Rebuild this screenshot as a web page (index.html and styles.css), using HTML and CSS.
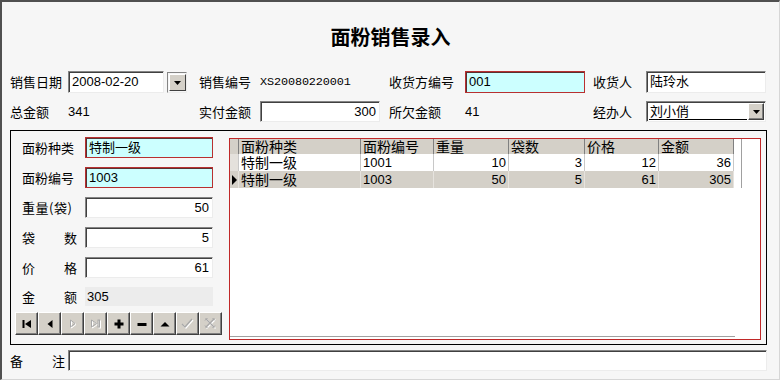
FILE: index.html
```html
<!DOCTYPE html>
<html>
<head>
<meta charset="utf-8">
<title>面粉销售录入</title>
<link rel="stylesheet" href="styles.css">
</head>
<body>
<div class="win">
  <div class="title">面粉销售录入</div>

  <div class="hdr">
    <span class="lbl">销售日期</span>
    <div class="date">
      <div class="field dfield">2008-02-20</div>
      <div class="dbtn"><div class="btn3d"><svg width="7" height="4" viewBox="0 0 7 4"><polygon points="0,0 7,0 3.5,4" fill="#000"/></svg></div></div>
    </div>
    <span class="lbl">销售编号</span>
    <span class="mono">XS20080220001</span>
    <span class="lbl">收货方编号</span>
    <div class="field req w120">001</div>
    <span class="lbl">收货人</span>
    <div class="field w120">陆玲水</div>

    <span class="lbl">总金额</span>
    <span class="val">341</span>
    <span class="lbl">实付金额</span>
    <div class="field w120 num">300</div>
    <span class="lbl">所欠金额</span>
    <span class="val">41</span>
    <span class="lbl">经办人</span>
    <div class="field combo">
      <div class="ctext">刘小俏</div>
      <div class="cbtn"><svg width="7" height="4" viewBox="0 0 7 4"><polygon points="0,0 7,0 3.5,4" fill="#000"/></svg></div>
    </div>
  </div>

  <div class="box">
    <div class="panel">
      <div class="prow"><span class="plbl">面粉种类</span><div class="field req pf">特制一级</div></div>
      <div class="prow"><span class="plbl">面粉编号</span><div class="field req pf">1003</div></div>
      <div class="prow"><span class="plbl sp1">重量(袋)</span><div class="field pf num">50</div></div>
      <div class="prow"><span class="plbl spread"><span>袋</span><span>数</span></span><div class="field pf num">5</div></div>
      <div class="prow"><span class="plbl spread"><span>价</span><span>格</span></span><div class="field pf num">61</div></div>
      <div class="prow arow"><span class="plbl spread"><span>金</span><span>额</span></span><div class="amt">305</div></div>
      <div class="nav">
        <div class="nb"><svg width="14" height="14" viewBox="0 0 14 14"><rect x="2.5" y="3" width="2" height="8" fill="#000"/><polygon points="11,3 5,7 11,11" fill="#000"/></svg></div>
        <div class="nb"><svg width="14" height="14" viewBox="0 0 14 14"><polygon points="9.5,3 4.5,7 9.5,11" fill="#000"/></svg></div>
        <div class="nb"><svg width="14" height="14" viewBox="0 0 14 14"><polygon points="5.5,4 10,7.5 5.5,11" fill="none" stroke="#fff"/><polygon points="4.5,3 9,6.5 4.5,10" fill="none" stroke="#a8a8a8"/></svg></div>
        <div class="nb"><svg width="14" height="14" viewBox="0 0 14 14"><polygon points="3.5,4 8.5,7.5 3.5,11" fill="none" stroke="#fff"/><rect x="10" y="4" width="1.5" height="7" fill="none" stroke="#fff"/><polygon points="2.5,3 7.5,6.5 2.5,10" fill="none" stroke="#a8a8a8"/><rect x="9" y="3" width="1.5" height="7" fill="none" stroke="#a8a8a8"/></svg></div>
        <div class="nb"><svg width="14" height="14" viewBox="0 0 14 14"><rect x="2.5" y="5.5" width="9" height="3" fill="#000"/><rect x="5.5" y="2.5" width="3" height="9" fill="#000"/></svg></div>
        <div class="nb"><svg width="14" height="14" viewBox="0 0 14 14"><rect x="2.5" y="6" width="9" height="3" fill="#000"/></svg></div>
        <div class="nb"><svg width="14" height="14" viewBox="0 0 14 14"><polygon points="2.5,9.5 7,5 11.5,9.5" fill="#000"/></svg></div>
        <div class="nb"><svg width="15" height="15" viewBox="0 0 15 15"><polyline points="3,9 6,12 13,4" fill="none" stroke="#fff" stroke-width="1.3"/><polyline points="2,8 5,11 12,3" fill="none" stroke="#a8a8a8" stroke-width="1.3"/></svg></div>
        <div class="nb"><svg width="15" height="15" viewBox="0 0 15 15"><path d="M3.5 3.5 L12.5 12.5 M12.5 3.5 L3.5 12.5" stroke="#fff" stroke-width="1.2" fill="none"/><path d="M2.5 2.5 L11.5 11.5 M11.5 2.5 L2.5 11.5" stroke="#a8a8a8" stroke-width="1.2" fill="none"/><path d="M2 4.5 L4.5 2 M9.5 2 L12 4.5 M2 9.5 L4.5 12 M9.5 12 L12 9.5" stroke="#a8a8a8" stroke-width="1" fill="none"/></svg></div>
      </div>
    </div>

    <div class="gwrap">
      <div class="grid">
        <div class="tbl">
          <div class="tr th">
            <div class="c ind"></div>
            <div class="c">面粉种类</div>
            <div class="c">面粉编号</div>
            <div class="c">重量</div>
            <div class="c">袋数</div>
            <div class="c">价格</div>
            <div class="c">金额</div>
          </div>
          <div class="tr">
            <div class="c ind"></div>
            <div class="c">特制一级</div>
            <div class="c n">1001</div>
            <div class="c n r">10</div>
            <div class="c n r">3</div>
            <div class="c n r">12</div>
            <div class="c n r">36</div>
          </div>
          <div class="tr sel">
            <div class="c ind"><svg width="7" height="10" viewBox="0 0 7 10"><polygon points="1,0 6,5 1,10" fill="#000"/></svg></div>
            <div class="c">特制一级</div>
            <div class="c n">1003</div>
            <div class="c n r">50</div>
            <div class="c n r">5</div>
            <div class="c n r">61</div>
            <div class="c n r">305</div>
          </div>
        </div>
        <div class="gspace"></div>
        <div class="gline"></div>
      </div>
    </div>
  </div>

  <div class="memo">
    <span class="ml"><span>备</span><span>注</span></span>
    <div class="field mf"></div>
  </div>
</div>
</body>
</html>
```

FILE: styles.css
```css
* { box-sizing: border-box; }
html, body { margin: 0; padding: 0; }
body {
  width: 780px;
  height: 380px;
  overflow: hidden;
  background: #f6f6f6;
  color: #000;
  font-family: "Liberation Sans", "Noto Sans CJK SC", sans-serif;
  font-size: 13px;
}
.win {
  width: 780px;
  height: 380px;
  background: #f6f6f6;
  border-top: 2px solid #505050;
  border-left: 2px solid #505050;
  border-right: 1px solid #d6d6d6;
  border-bottom: 1px solid #d6d6d6;
}
.title {
  height: 69px;
  display: flex;
  align-items: center;
  justify-content: center;
  font-family: "Noto Sans CJK SC", sans-serif;
  font-weight: bold;
  font-size: 20px;
}
.hdr {
  display: grid;
  grid-template-columns: 58px 131px 61px 129px 76px 128px 53px 120px;
  grid-template-rows: 22px 21px;
  row-gap: 8px;
  margin-left: 8px;
  align-items: center;
}
.lbl { font-family: "Noto Sans CJK SC", sans-serif; font-size: 13px; line-height: 16px; }
.val { font-size: 13px; }
.mono { font-family: "Liberation Mono", monospace; font-size: 11.8px; letter-spacing: -0.1px; }
.field {
  height: 100%;
  background: #fff;
  border: 1px solid;
  border-color: #848484 #ececec #ececec #848484;
  box-shadow: inset 1px 1px 0 #404040;
  padding: 0 3px;
  line-height: 19px;
  white-space: nowrap;
  overflow: hidden;
  font-size: 13px;
}
.w120 { width: 120px; }
.num { text-align: right; }
.req {
  background: #ccffff;
  border: 1px solid #b83030;
  box-shadow: inset 1px 1px 0 #5a3030;
}
.date { display: flex; gap: 3px; height: 100%; }
.dfield { width: 96px; }
.dbtn {
  width: 20px;
  height: 21px;
  margin-top: 1px;
  border: 1px solid;
  border-color: #848484 #ececec #ececec #848484;
  padding: 1px 0 0 1px;
}
.btn3d {
  width: 17px;
  height: 17px;
  background: #d4d0c8;
  border: 1px solid;
  border-color: #fff #404040 #404040 #fff;
  display: flex;
  align-items: center;
  justify-content: center;
}
.combo {
  display: flex;
  align-items: stretch;
  padding: 1px 1px 1px 2px;
  gap: 1px;
}
.ctext {
  flex: 1;
  line-height: 17px;
  border-bottom: 1px solid #000;
  padding-left: 1px;
}
.cbtn {
  width: 16px;
  background: #d4d0c8;
  border: 1px solid;
  border-color: #fff #404040 #404040 #fff;
  box-shadow: inset -1px -1px 0 #808080;
  display: flex;
  align-items: center;
  justify-content: center;
}
.box {
  margin: 8px 0 0 8px;
  width: 757px;
  height: 215px;
  border: 1px solid #000;
  display: flex;
}
.panel {
  width: 218px;
  padding: 6px 0 0 4px;
  display: flex;
  flex-direction: column;
}
.prow {
  display: flex;
  align-items: center;
  height: 21px;
  margin-bottom: 9px;
  padding-left: 7px;
}
.arow { height: 19px; margin-bottom: 6px; }
.plbl {
  width: 55px;
  margin-right: 8px;
  font-family: "Noto Sans CJK SC", sans-serif;
  font-size: 13px;
  white-space: nowrap;
}
.sp1 { letter-spacing: 0.5px; }
.spread { display: flex; justify-content: space-between; }
.pf { width: 128px; }
.amt {
  width: 128px;
  height: 19px;
  background: #ececec;
  line-height: 19px;
  padding-left: 2px;
}
.nav { display: flex; height: 23px; }
.nb {
  width: 23px;
  height: 23px;
  background: #d4d0c8;
  border: 1px solid;
  border-color: #fff #404040 #404040 #fff;
  box-shadow: inset -1px -1px 0 #808080;
  display: flex;
  align-items: center;
  justify-content: center;
}
.gwrap { padding-top: 7px; }
.grid {
  width: 532px;
  height: 202px;
  border: 1px solid #c02828;
  background: #fff;
  display: flex;
  flex-direction: column;
}
.tbl { width: 512px; border-right: 1px solid #a0a0a0; }
.tr {
  width: 504px;
  display: grid;
  grid-template-columns: 9px 122px 73px 75px 76px 74px 75px;
  height: 17px;
  font-family: "Noto Sans CJK SC", sans-serif;
  font-size: 14px;
}
.th { height: 15px; background: #d4d0c8; }
.th .c { border-right: 1px solid #808080; line-height: 15px; }
.sel { background: #d4d0c8; }
.c {
  border-right: 1px solid #c8c8c8;
  padding: 0 2px;
  line-height: 17px;
  white-space: nowrap;
}
.sel .c { border-right-color: #e6e3de; }
.n { font-family: "Liberation Sans", sans-serif; font-size: 13px; }
.r { text-align: right; }
.ind { padding: 0; background: #e4e1dc; display: flex; align-items: center; justify-content: center; }
.th .ind, .sel .ind { background: #d4d0c8; }
.gspace { flex: 1; }
.gline { width: 505px; height: 1px; background: #a0a0a0; margin-bottom: 2px; }
.memo {
  display: flex;
  align-items: center;
  margin: 5px 0 0 8px;
  height: 21px;
}
.ml {
  width: 58px;
  display: flex;
  justify-content: space-between;
  padding-right: 3px;
  font-family: "Noto Sans CJK SC", sans-serif;
}
.mf { width: 699px; }
```
